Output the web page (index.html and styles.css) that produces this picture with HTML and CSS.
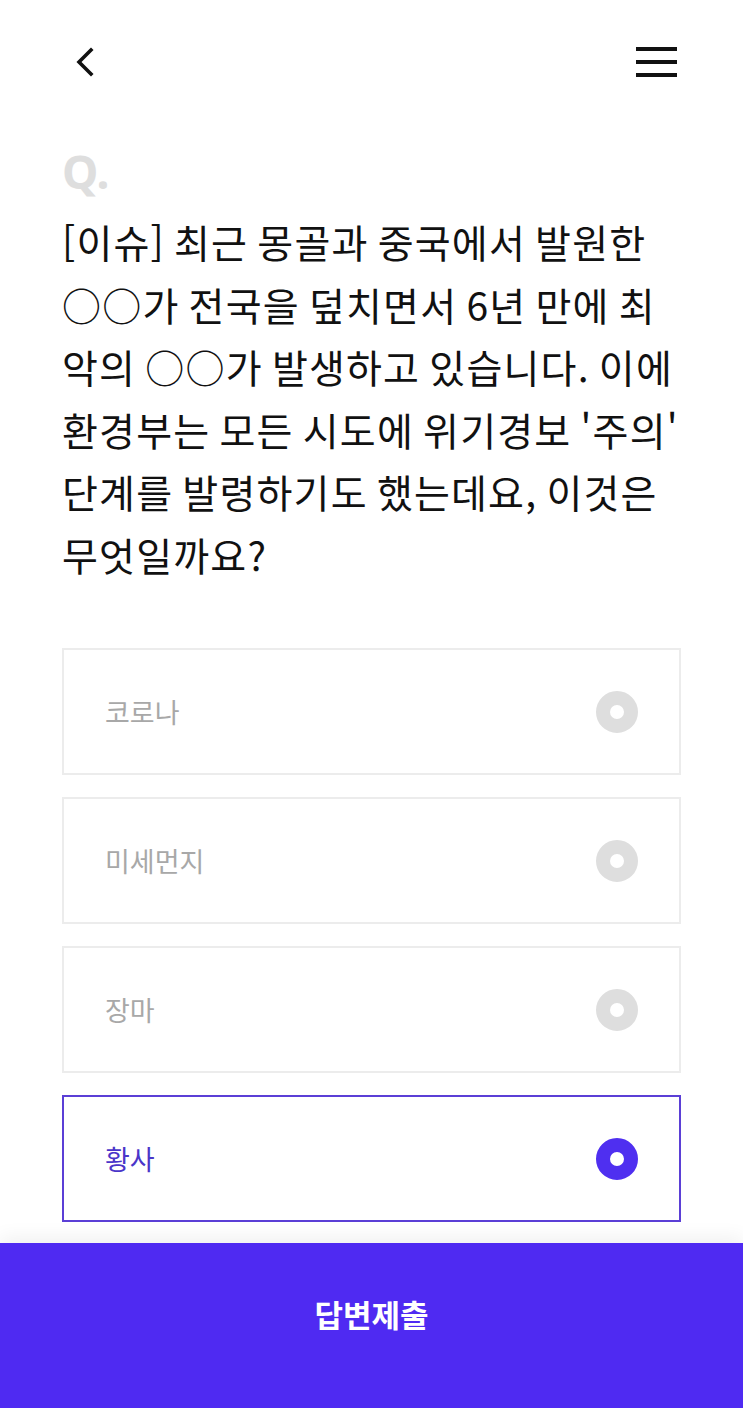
FILE: index.html
```html
<!DOCTYPE html>
<html lang="ko">
<head>
    <meta charset="UTF-8">
    <meta name="viewport" content="width=device-width, initial-scale=1.0">
    <title>Quiz</title>
    <link rel="stylesheet" href="styles.css">
</head>
<body>

    <!-- Top Bar -->
    <div class="top-bar">
        <button class="icon-btn back-btn" aria-label="뒤로">
            <svg width="24" height="32" viewBox="0 0 24 32">
                <path d="M19 4 L7 16 L19 28" fill="none" stroke="#111" stroke-width="3.6" stroke-linecap="square"/>
            </svg>
        </button>
        <button class="icon-btn menu-btn" aria-label="메뉴">
            <span></span>
            <span></span>
            <span></span>
        </button>
    </div>

    <!-- Question -->
    <div class="question">
        <div class="q-mark">Q.</div>
        <p class="q-text">[이슈] 최근 몽골과 중국에서 발원한<br>○○가 전국을 덮치면서 6년 만에 최<br>악의 ○○가 발생하고 있습니다. 이에<br>환경부는 모든 시도에 위기경보 '주의'<br>단계를 발령하기도 했는데요, 이것은<br>무엇일까요?</p>
    </div>

    <!-- Answer Options -->
    <ul class="options">
        <li class="option"><span>코로나</span><i class="radio"></i></li>
        <li class="option"><span>미세먼지</span><i class="radio"></i></li>
        <li class="option"><span>장마</span><i class="radio"></i></li>
        <li class="option selected"><span>황사</span><i class="radio"></i></li>
    </ul>

    <button class="submit-btn">답변제출</button>

</body>
</html>
```

FILE: styles.css
```css
/* Global Styles */
html, body {
    margin: 0;
    padding: 0;
    background: #fff;
    font-family: "Noto Sans CJK KR", "Noto Sans", sans-serif;
    color: #111;
}

/* Top Bar */
.top-bar {
    height: 124px;
    padding: 0 66px 0 72px;
    display: flex;
    justify-content: space-between;
    align-items: center;
}

.icon-btn {
    border: none;
    background: none;
    padding: 0;
    cursor: pointer;
}

.back-btn svg {
    display: block;
}

.menu-btn {
    width: 41px;
    height: 30px;
    display: flex;
    flex-direction: column;
    justify-content: space-between;
}

.menu-btn span {
    display: block;
    height: 4px;
    background: #111;
}

/* Question */
.question {
    padding: 0 62px;
}

.q-mark {
    margin-top: 22px;
    font-family: "Noto Sans", sans-serif;
    font-size: 46px;
    font-weight: 700;
    line-height: 50px;
    color: #dedede;
}

.q-text {
    margin: 14px 0 0;
    font-size: 39px;
    line-height: 62.5px;
    letter-spacing: 1.2px;
    word-spacing: -3px;
    white-space: nowrap;
}

/* Options */
.options {
    list-style: none;
    margin: 63px 0 0;
    padding: 0 62px;
    display: flex;
    flex-direction: column;
    gap: 22px;
}

.option {
    height: 127px;
    box-sizing: border-box;
    border: 2px solid #ececec;
    padding: 0 42px 0 41px;
    display: flex;
    align-items: center;
    justify-content: space-between;
    font-size: 27px;
    color: #a8a8a8;
}

.radio {
    width: 14px;
    height: 14px;
    border-radius: 50%;
    border: 14px solid #dedede;
    background: #fff;
    margin-right: -1px;
}

.option.selected {
    border-color: #5b3fd6;
    color: #4a35c9;
}

.option.selected .radio {
    border-color: #4f2ff0;
}

/* Submit */
.submit-btn {
    display: block;
    width: 100%;
    height: 165px;
    margin-top: 21px;
    padding: 0 0 24px;
    border: none;
    background: #4f2af2;
    color: #fff;
    font-family: inherit;
    font-size: 31px;
    font-weight: 700;
    box-shadow: 0 -6px 18px rgba(0, 0, 0, 0.06);
    cursor: pointer;
}
```
